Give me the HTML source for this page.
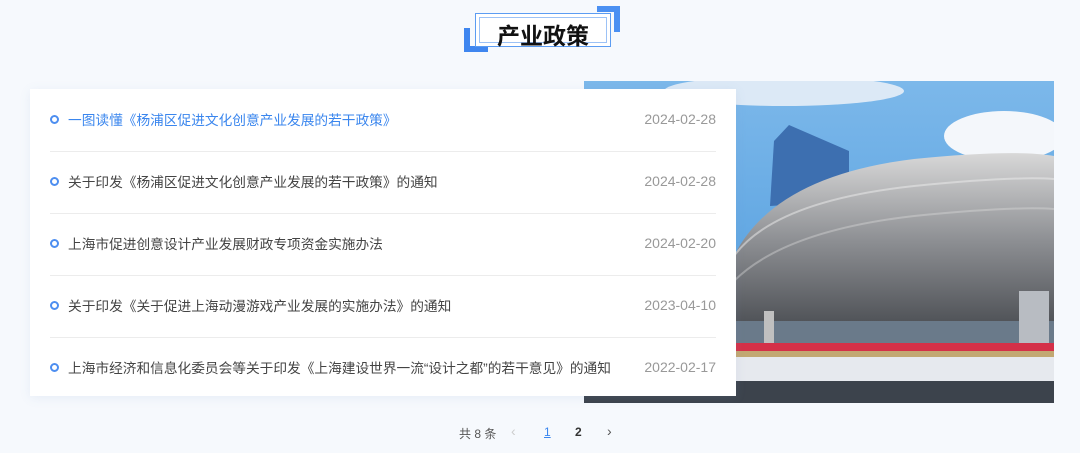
<!DOCTYPE html>
<html><head><meta charset="utf-8"><style>
html,body{margin:0;padding:0}
body{width:1080px;height:453px;background:#f6f9fd;position:relative;overflow:hidden;font-family:"Liberation Sans","Noto Sans CJK SC",sans-serif}
.title{position:absolute;left:475px;top:13px;width:136px;height:34px;border:1px solid #5b9cf2;background:#fff;box-sizing:border-box}
.title .in{position:absolute;left:3px;top:3px;right:3px;bottom:3px;border:1px solid #9cc2f6}
.title span{position:absolute;left:0;right:0;top:3px;text-align:center;font-size:23px;font-weight:bold;color:#111}
.c1{position:absolute;left:464px;top:28px;width:6px;height:24px;background:#3f86ef}
.c1b{position:absolute;left:464px;top:46px;width:24px;height:6px;background:#3f86ef}
.c2{position:absolute;left:614px;top:6px;width:6px;height:26px;background:#4b90f2}
.c2b{position:absolute;left:597px;top:6px;width:23px;height:6px;background:#4b90f2}
.pic{position:absolute;left:584px;top:81px;width:470px;height:322px}
.card{position:absolute;left:30px;top:89px;width:706px;height:307px;background:#fff;box-shadow:0 2px 10px rgba(120,150,200,.12)}
.row{position:absolute;left:20px;width:666px;height:62px;font-size:13.7px;color:#444}
.row .d{position:absolute;left:0;top:26px;width:5px;height:5px;border:2px solid #4d8ef0;border-radius:50%}
.row .t{position:absolute;left:18px;top:20px;white-space:nowrap}
.row .dt{position:absolute;right:0;top:22px;color:#999;font-size:14px}
.row.b{border-bottom:1px solid #ececec}
.pg{position:absolute;top:425px;font-size:12px;color:#555}
</style></head><body>
<div class="c1"></div><div class="c1b"></div><div class="c2"></div><div class="c2b"></div>
<div class="title"><div class="in"></div><span>产业政策</span></div>
<svg class="pic" viewBox="0 0 470 322" preserveAspectRatio="none">
<defs><linearGradient id="sky" x1="0" y1="0" x2="0" y2="1"><stop offset="0" stop-color="#7cb8ea"/><stop offset="1" stop-color="#4a98dc"/></linearGradient>
<linearGradient id="st" x1="0" y1="0" x2="0" y2="1"><stop offset="0" stop-color="#d8d8d8"/><stop offset="0.5" stop-color="#8c8e92"/><stop offset="1" stop-color="#4a4d52"/></linearGradient></defs>
<rect width="470" height="322" fill="url(#sky)"/>
<ellipse cx="420" cy="55" rx="60" ry="25" fill="#f4f7fb"/>
<ellipse cx="200" cy="10" rx="120" ry="15" fill="#dce9f6"/>
<polygon points="190,60 205,44 265,70 265,120 186,125" fill="#3d6fb0"/>
<path d="M150 175 Q190 95 330 78 Q430 68 470 75 L470 250 L150 250 Z" fill="url(#st)"/>
<path d="M150 175 Q190 120 330 105 Q430 95 470 98" stroke="#eee" stroke-width="2" fill="none" opacity=".5"/>
<path d="M150 200 Q200 150 330 135 Q430 125 470 128" stroke="#ddd" stroke-width="2" fill="none" opacity=".4"/>
<rect x="150" y="240" width="320" height="25" fill="#6a7a8a"/>
<rect x="435" y="210" width="30" height="60" fill="#b8bcc2"/>
<rect x="180" y="230" width="10" height="40" fill="#c0c0c0"/>
<rect x="150" y="262" width="320" height="9" fill="#d43048"/>
<rect x="150" y="270" width="320" height="6" fill="#c2a872"/>
<rect x="150" y="276" width="320" height="24" fill="#e6e9ee"/>
<rect x="0" y="300" width="470" height="22" fill="#3c434c"/>
</svg>
<div class="card">
<div class="row b" style="top:0"><div class="d"></div><div class="t" style="color:#3a86ee">一图读懂《杨浦区促进文化创意产业发展的若干政策》</div><div class="dt">2024-02-28</div></div>
<div class="row b" style="top:62px"><div class="d"></div><div class="t">关于印发《杨浦区促进文化创意产业发展的若干政策》的通知</div><div class="dt">2024-02-28</div></div>
<div class="row b" style="top:124px"><div class="d"></div><div class="t">上海市促进创意设计产业发展财政专项资金实施办法</div><div class="dt">2024-02-20</div></div>
<div class="row b" style="top:186px"><div class="d"></div><div class="t">关于印发《关于促进上海动漫游戏产业发展的实施办法》的通知</div><div class="dt">2023-04-10</div></div>
<div class="row" style="top:248px"><div class="d"></div><div class="t">上海市经济和信息化委员会等关于印发《上海建设世界一流“设计之都”的若干意见》的通知</div><div class="dt">2022-02-17</div></div>
</div>
<div class="pg" style="left:459px">共 8 条</div>
<div class="pg" style="left:511px;color:#ccc;font-size:14px;top:423px">‹</div>
<div class="pg" style="left:544px;color:#3a86ee;text-decoration:underline">1</div>
<div class="pg" style="left:575px;font-weight:bold;color:#333">2</div>
<div class="pg" style="left:607px;font-size:14px;top:423px">›</div>
</body></html>
